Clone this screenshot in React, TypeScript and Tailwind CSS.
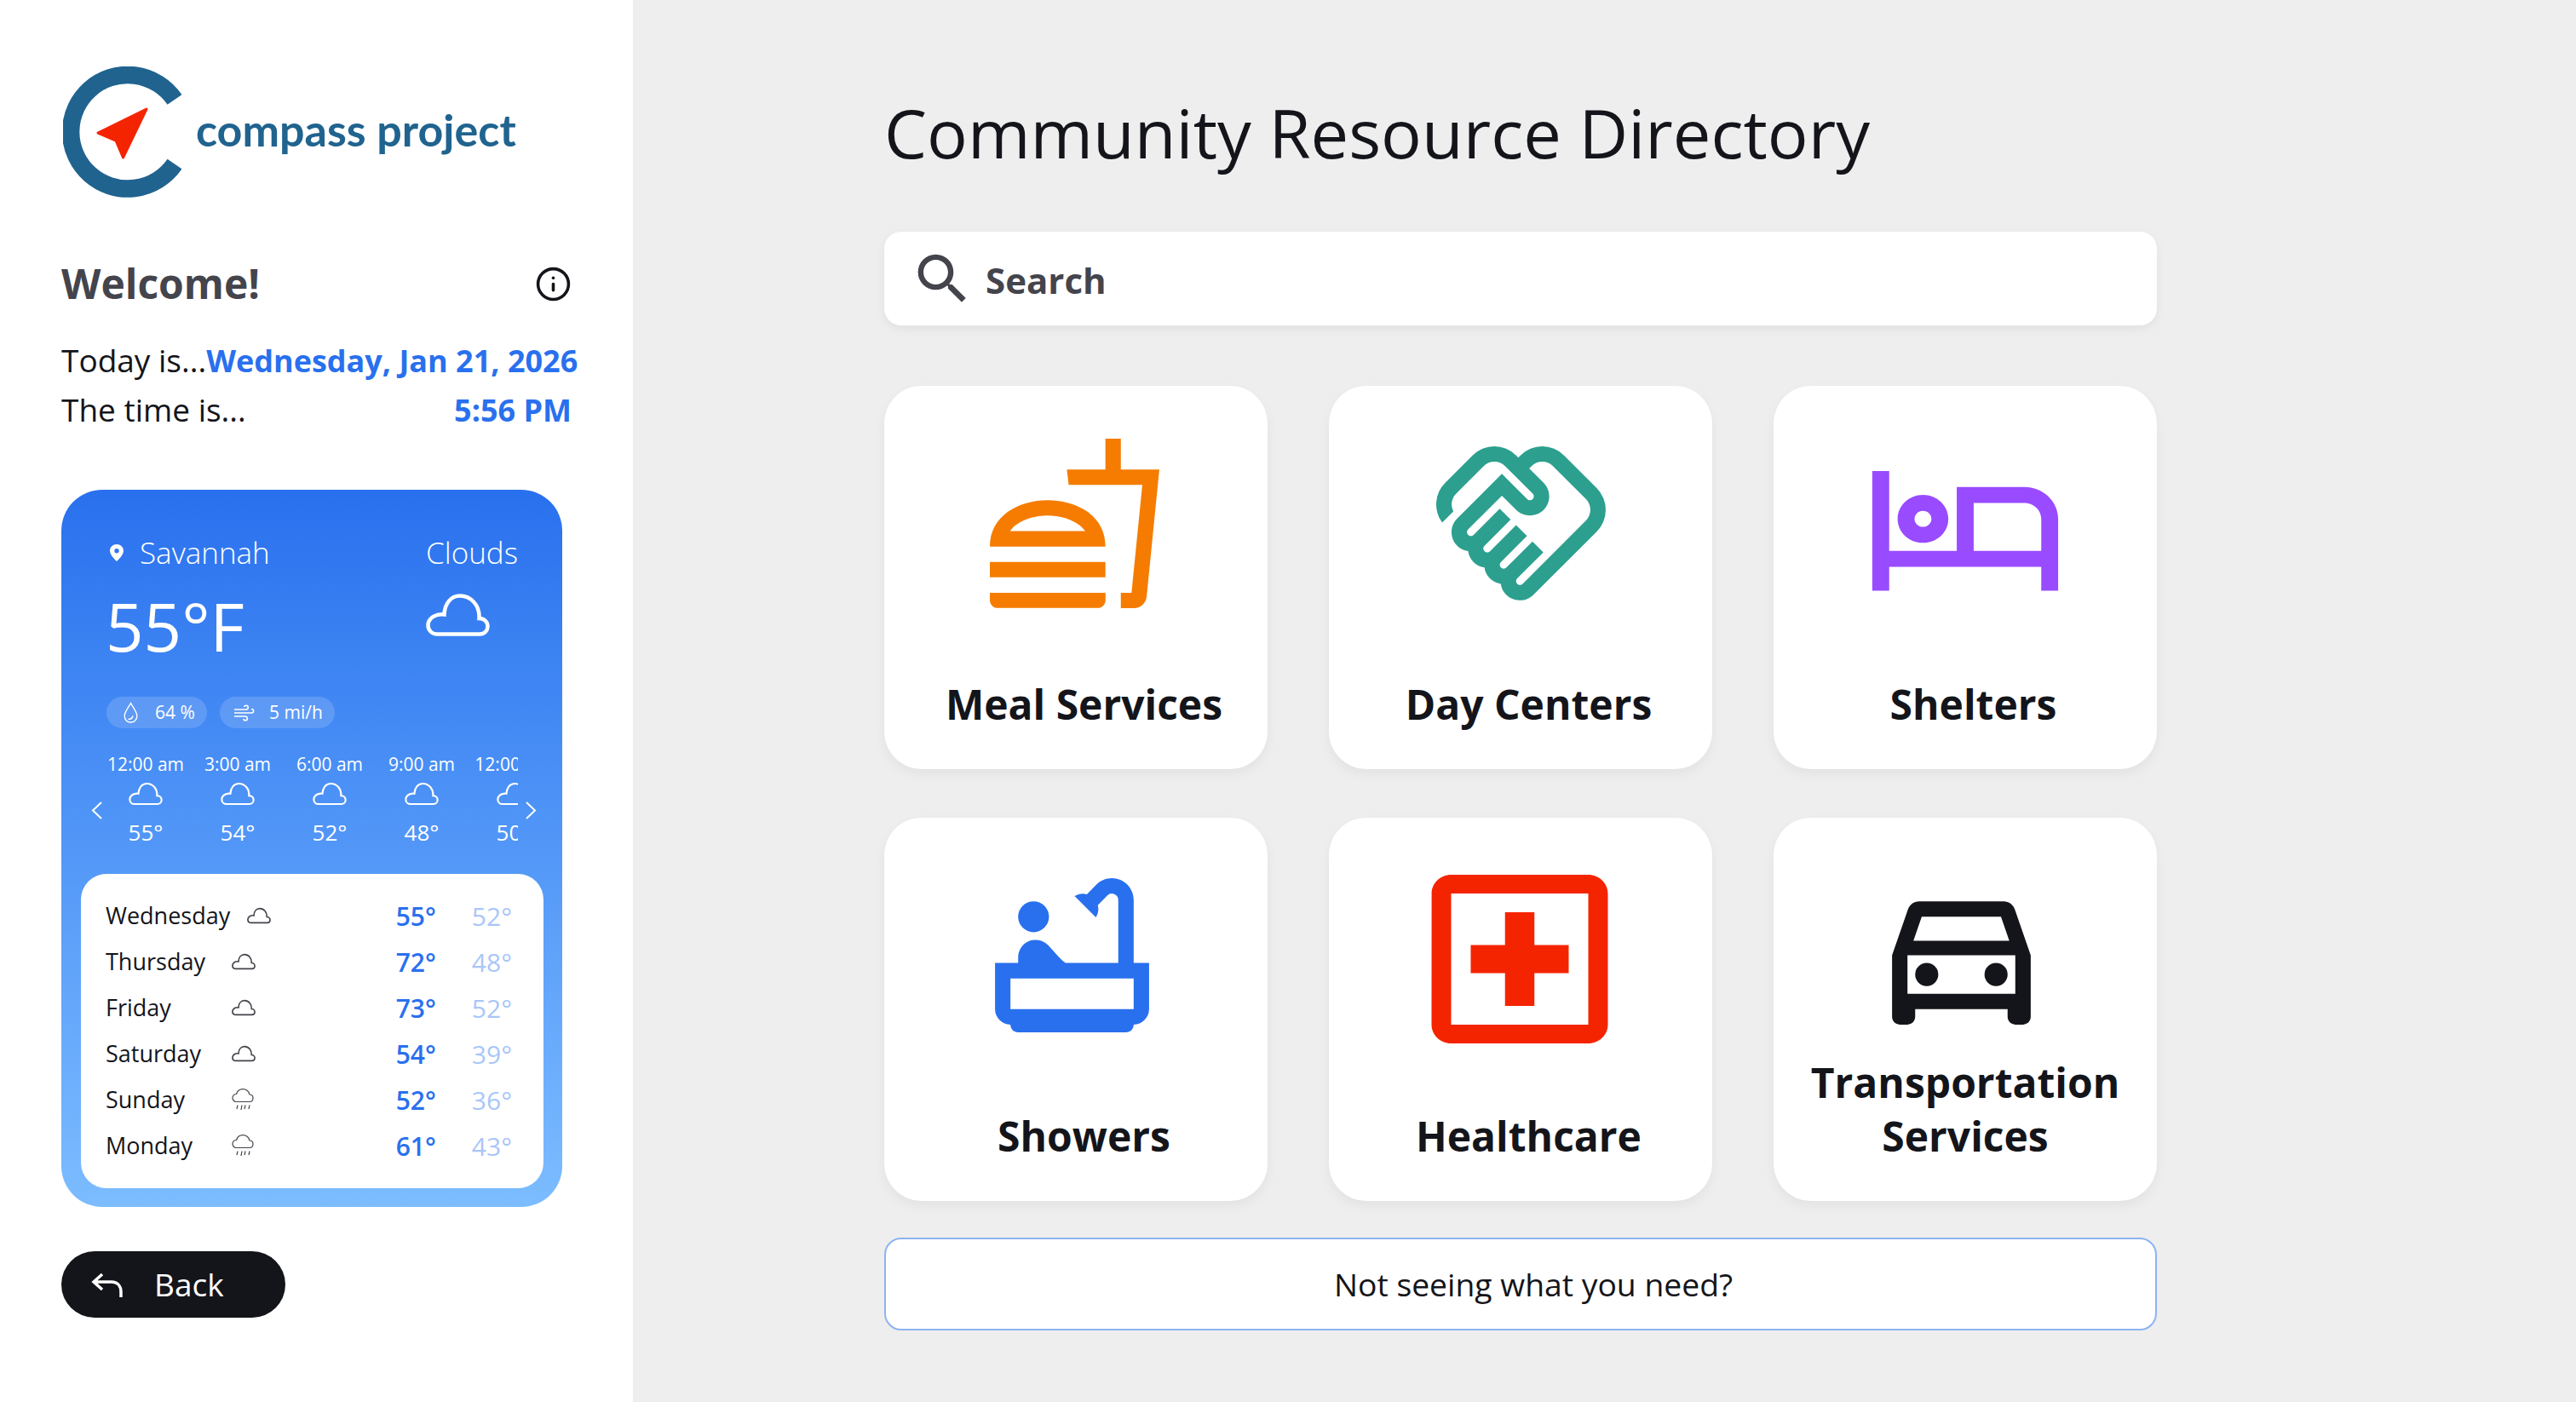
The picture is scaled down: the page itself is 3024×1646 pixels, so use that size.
import { Info } from "lucide-react";
import {
  MdOutlineBathtub,
  MdOutlineDirectionsCar,
  MdOutlineFastfood,
  MdOutlineHandshake,
  MdOutlineHotel,
  MdOutlineLocalHospital,
  MdSearch,
} from "react-icons/md";

const Cloud = ({ className, sw }: { className: string; sw: number }) => (
  <svg viewBox="0 0 75 50" className={className} fill="none" stroke="currentColor" strokeWidth={sw}>
    <path d="M13 47.5H63C69 47.5 72.5 43 72.5 38.5C72.5 33 68 29 62.5 29C63.5 14 53 2.5 40 2.5C29 2.5 22 12 21.5 24.5C10 23 2.5 30 2.5 37C2.5 43 7 47.5 13 47.5Z" />
  </svg>
);

const RainCloud = () => (
  <svg viewBox="0 0 26 26" className="w-[26px] h-[26px] text-[#44444c]" fill="none" stroke="currentColor" strokeWidth="1.2">
    <path d="M5 15.500H21C24 15.500 25 13 25 11C25 8 23 7 21 7C20 3.500 17 .7 13 .7C9 .7 6.500 3.500 5.500 6.500C3 6.500 1 8 1 11C1 13 3 15.500 5 15.500Z" />
    <path d="M7 19.500L6 24M12 19.500L11 25M16 19.500L15 24M21 19.500L20 24" />
  </svg>
);

const hours = [
  { time: "12:00 am", temp: "55°" },
  { time: "3:00 am", temp: "54°" },
  { time: "6:00 am", temp: "52°" },
  { time: "9:00 am", temp: "48°" },
  { time: "12:00 pm", temp: "50°" },
];

const days = [
  { name: "Wednesday", hi: "55°", lo: "52°", rain: false },
  { name: "Thursday", hi: "72°", lo: "48°", rain: false },
  { name: "Friday", hi: "73°", lo: "52°", rain: false },
  { name: "Saturday", hi: "54°", lo: "39°", rain: false },
  { name: "Sunday", hi: "52°", lo: "36°", rain: true },
  { name: "Monday", hi: "61°", lo: "43°", rain: true },
];

const WeatherCard = () => (
  <div className="mt-[64px] w-[588px] h-[842px] rounded-[48px] bg-gradient-to-b from-[#2970ee] to-[#7cbcff] text-white flex flex-col">
    <div className="pl-[57px] pr-[52px] pt-[50px] flex justify-between">
      <div>
        <div className="flex items-center h-[48px] text-[35px] font-[350]">
          <svg viewBox="0 0 16 20" className="w-[16px] h-[20px]" fill="currentColor">
            <path fillRule="evenodd" d="M8 0C3.6 0 0 3.3 0 7.6C0 12 4.5 16.8 8 20C11.500 16.800 16 12 16 7.600C16 3.300 12.400 0 8 0ZM8 5A2.700 2.700 0 1 1 8 10.400A2.700 2.700 0 1 1 8 5Z" />
          </svg>
          <span className="ml-[19px]">Savannah</span>
        </div>
        <div className="mt-[14px] text-[78px] leading-[96px] -ml-[5px]">55°F</div>
      </div>
      <div className="flex flex-col">
        <div className="h-[48px] leading-[48px] text-[35px] font-[350]">Clouds</div>
        <Cloud className="mt-[24px] w-[75px] h-[50px]" sw={4.5} />
      </div>
    </div>

    <div className="mt-[35px] pl-[53px] flex gap-[15px] text-[21px]">
      <div className="w-[118px] h-[37px] rounded-full bg-white/15 flex items-center pl-[20px]">
        <svg viewBox="0 0 17 25" className="w-[17px] h-[25px]" fill="none" stroke="currentColor" strokeWidth="1.4">
          <path d="M8.500 1.500C6 6.500 1.200 11.500 1.200 16.500C1.200 21 4.500 24 8.500 24C12.500 24 15.800 21 15.800 16.500C15.800 11.500 11 6.500 8.500 1.500Z" />
          <path d="M5.500 20.500C8 20.500 10.500 19 11 16.500" />
        </svg>
        <span className="ml-[20px]">64 %</span>
      </div>
      <div className="w-[135px] h-[37px] rounded-full bg-white/15 flex items-center pl-[16px]">
        <svg viewBox="0 0 25 20" className="w-[25px] h-[20px]" fill="none" stroke="currentColor" strokeWidth="1.6">
          <path d="M1 6H15C18 6 18 1.200 15 1.200C13.600 1.200 12.800 2 12.800 3M1 10H21C24.500 10 24.500 5.500 21 5.500M1 14H14C17 14 17 18.800 14 18.800C12.800 18.800 12 18 12 17" />
        </svg>
        <span className="ml-[17px]">5 mi/h</span>
      </div>
    </div>

    <div className="mt-[27px] flex items-center relative">
      <svg viewBox="0 0 13 21" className="w-[13px] h-[21px] absolute left-[35px] top-[59px]" fill="none" stroke="currentColor" strokeWidth="2">
        <path d="M12 1L2 10.500L12 20" />
      </svg>
      <div className="ml-[45px] w-[491px] overflow-hidden flex">
        {hours.map((h) => (
          <div key={h.time} className="w-[108px] shrink-0 flex flex-col items-center whitespace-nowrap">
            <div className="text-[21px] leading-[30px]">{h.time}</div>
            <Cloud className="mt-[6px] w-[40px] h-[28px]" sw={4} />
            <div className="mt-[13px] text-[26px] leading-[36px] font-medium">{h.temp}</div>
          </div>
        ))}
      </div>
      <svg viewBox="0 0 13 21" className="w-[13px] h-[21px] absolute left-[545px] top-[59px]" fill="none" stroke="currentColor" strokeWidth="2">
        <path d="M1 1L11 10.500L1 20" />
      </svg>
    </div>

    <div className="mt-auto mb-[22px] ml-[23px] w-[543px] h-[369px] rounded-[30px] bg-white pt-[22px] pl-[29px] pr-[37px] text-[#14151a]">
      {days.map((d) => (
        <div key={d.name} className="h-[54px] flex items-center">
          <span className="min-w-[128px] text-[27px]">{d.name}</span>
          <span className="ml-[20px] text-[#44444c]">
            {d.rain ? <RainCloud /> : <Cloud className="w-[28px] h-[20px]" sw={4.5} />}
          </span>
          <span className="ml-auto text-[30px] font-semibold text-[#2970ee]">{d.hi}</span>
          <span className="ml-[42px] text-[30px] text-[#a9c6f8]">{d.lo}</span>
        </div>
      ))}
    </div>
  </div>
);

const Sidebar = () => (
  <aside className="w-[743px] shrink-0 bg-white pl-[72px] pt-[78px]">
    <div className="flex">
      <svg viewBox="0 0 139 154" className="ml-[2px] w-[139px] h-[154px]">
        <path d="M131 39A66.800 66.800 0 1 0 131 114.500" fill="none" stroke="#20638f" strokeWidth="20.500" />
        <path d="M98 50L41 78L62 87L70.500 107Z" fill="#f52400" stroke="#f52400" strokeWidth="3" strokeLinejoin="round" />
      </svg>
      <div className="ml-[17px] mt-[44px] text-[52px] leading-[60px] font-bold text-[#20638f] font-['Lato',sans-serif]">
        compass project
      </div>
    </div>

    <div className="mt-[66px] w-[599px] flex items-center justify-between">
      <h2 className="text-[48px] leading-[70px] font-bold text-[#44444c]">Welcome!</h2>
      <Info size={43} strokeWidth={2} className="text-[#14151a]" />
    </div>
    <div className="mt-[26px] text-[37px] leading-[58px] text-[#14151a]">
      Today is...<span className="text-[36px] font-bold text-[#2970ee]">Wednesday, Jan 21, 2026</span>
    </div>
    <div className="-mt-[1px] w-[599px] flex justify-between items-baseline text-[37px] leading-[58px] text-[#14151a]">
      <span>The time is...</span>
      <span className="text-[36px] font-bold text-[#2970ee]">5:56 PM</span>
    </div>

    <WeatherCard />

    <button className="mt-[52px] w-[263px] h-[78px] rounded-full bg-[#14151a] text-white flex items-center pl-[35px] text-[37px] font-medium">
      <svg viewBox="0 0 37 29" className="w-[37px] h-[29px]" fill="none" stroke="currentColor" strokeWidth="3.500">
        <path d="M13 2L3 11L13 20M3 11H24C31 11 35 16 35 23V29" />
      </svg>
      <span className="ml-[37px]">Back</span>
    </button>
  </aside>
);

const services = [
  { label: "Meal Services", Icon: MdOutlineFastfood, color: "text-[#f57c00]", icon: "mt-[53px] mr-[3px] w-[217px] h-[217px]", pad: true },
  { label: "Day Centers", Icon: MdOutlineHandshake, color: "text-[#2d9f8f]", icon: "mt-[53px] w-[217px] h-[217px]", pad: true },
  { label: "Shelters", Icon: MdOutlineHotel, color: "text-[#994bff]", icon: "mt-[53px] w-[238px] h-[225px]", pad: true },
  { label: "Showers", Icon: MdOutlineBathtub, color: "text-[#2970ee]", icon: "mt-[53px] mr-[9px] w-[217px] h-[217px]", pad: true },
  { label: "Healthcare", Icon: MdOutlineLocalHospital, color: "text-[#f52400]", icon: "mt-[34px] mr-[2px] w-[276px] h-[264px]", pad: true },
  { label: "Transportation Services", Icon: MdOutlineDirectionsCar, color: "text-[#14151a]", icon: "mt-[53px] mr-[9px] w-[217px] h-[217px]", pad: false },
];

const App = () => (
  <div className="h-screen flex bg-[#eeeeee] overflow-hidden font-['Open_Sans',sans-serif]">
    <Sidebar />
    <main className="pl-[295px] pt-[98px] w-[1789px]">
      <h1 className="text-[79.500px] leading-[118px] font-medium text-[#14151a] -mt-[2px]">Community Resource Directory</h1>
      <div className="mt-[58px] h-[110px] rounded-[20px] bg-white shadow-[0_4px_12px_rgba(0,0,0,0.06)] flex items-center pl-[30px] w-[1494px]">
        <MdSearch className="w-[77px] h-[77px] text-[#44444c]" />
        <span className="ml-[12px] mt-[2px] text-[42px] font-bold text-[#44444c]">Search</span>
      </div>
      <div className="mt-[71px] grid grid-cols-3 gap-x-[72px] gap-y-[57px] w-[1494px]">
        {services.map(({ label, Icon, color, icon, pad }) => (
          <div
            key={label}
            className="h-[450px] rounded-[44px] bg-white shadow-[0_6px_14px_rgba(0,0,0,0.05)] flex flex-col items-center"
          >
            <Icon className={`${icon} ${color}`} preserveAspectRatio="none" />
            <div
              className={`mt-auto mb-[45px] text-center text-[48px] leading-[63px] font-bold text-[#14151a] ${pad ? "pl-[19px]" : "w-[380px]"}`}
            >
              {label}
            </div>
          </div>
        ))}
      </div>
      <button className="mt-[43px] w-[1494px] h-[109px] pl-[30px] rounded-[20px] bg-white border-2 border-[#8cb4f0] text-[37.300px] font-medium text-[#14151a]">
        Not seeing what you need?
      </button>
    </main>
  </div>
);

export default App;
